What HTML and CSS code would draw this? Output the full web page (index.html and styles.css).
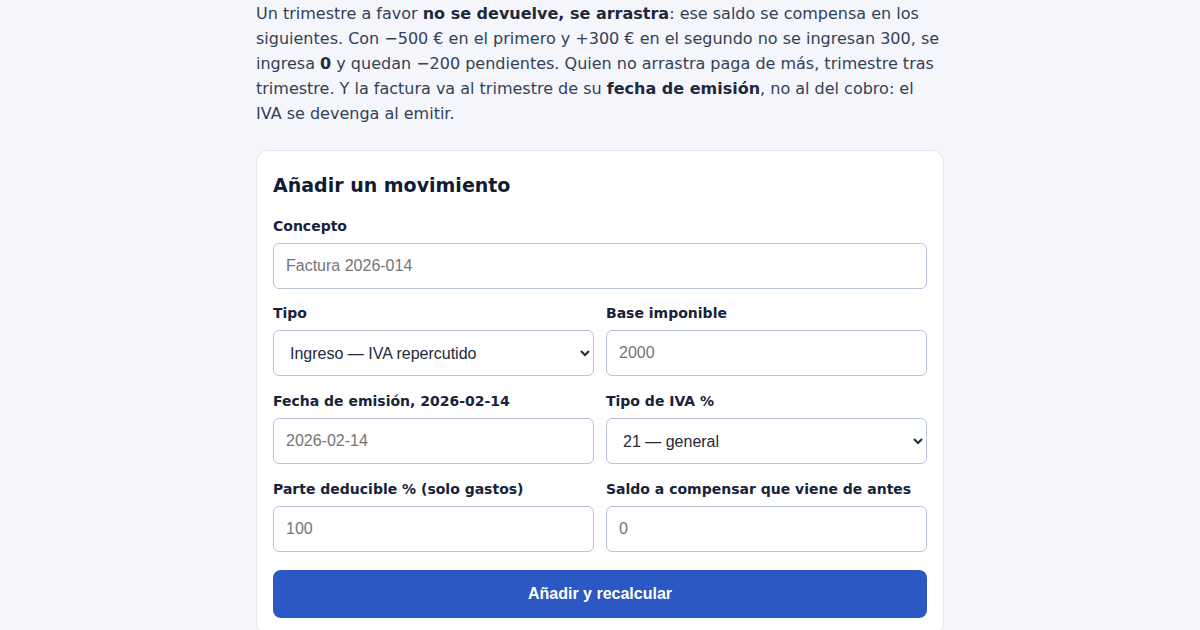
FILE: index.html
```html
<!DOCTYPE html>
<html lang="es">
<head>
  <meta charset="UTF-8" />
  <meta name="viewport" content="width=device-width, initial-scale=1.0"/>
  <title>IVA trimestral</title>
  <link rel="stylesheet" href="styles.css">
</head>
<body>
  <main class="page">
    <p class="intro">
      Un trimestre a favor <strong>no se devuelve, se arrastra</strong>: ese saldo se compensa en los
      siguientes. Con −500 € en el primero y +300 € en el segundo no se ingresan 300, se
      ingresa <strong>0</strong> y quedan −200 pendientes. Quien no arrastra paga de más, trimestre tras
      trimestre. Y la factura va al trimestre de su <strong>fecha de emisión</strong>, no al del cobro: el
      IVA se devenga al emitir.
    </p>

    <form class="card" onsubmit="return false;">
      <h2>Añadir un movimiento</h2>

      <div class="field field-wide">
        <label for="concepto">Concepto</label>
        <input id="concepto" type="text" placeholder="Factura 2026-014" />
      </div>

      <div class="grid">
        <div class="field">
          <label for="tipo">Tipo</label>
          <select id="tipo">
            <option>Ingreso — IVA repercutido</option>
            <option>Gasto — IVA soportado</option>
          </select>
        </div>
        <div class="field">
          <label for="base">Base imponible</label>
          <input id="base" type="number" placeholder="2000" />
        </div>
        <div class="field">
          <label for="fecha">Fecha de emisión, 2026-02-14</label>
          <input id="fecha" type="text" placeholder="2026-02-14" />
        </div>
        <div class="field">
          <label for="iva">Tipo de IVA %</label>
          <select id="iva">
            <option>21 — general</option>
            <option>10 — reducido</option>
            <option>4 — superreducido</option>
            <option>0 — exento</option>
          </select>
        </div>
        <div class="field">
          <label for="deducible">Parte deducible % (solo gastos)</label>
          <input id="deducible" type="number" placeholder="100" />
        </div>
        <div class="field">
          <label for="saldo">Saldo a compensar que viene de antes</label>
          <input id="saldo" type="number" placeholder="0" />
        </div>
      </div>

      <button class="btn" type="submit">Añadir y recalcular</button>
    </form>
  </main>
</body>
</html>
```

FILE: styles.css
```css
* { box-sizing: border-box; }
body {
  margin: 0;
  background: #f4f6fb;
  font-family: 'DejaVu Sans', sans-serif;
  color: #334155;
}
.page {
  width: 688px;
  margin: 0 auto;
  padding-top: 1px;
}
.intro {
  margin: 0 0 24px;
  font-size: 16px;
  line-height: 25px;
  color: #334155;
}
.intro strong { color: #1e293b; }
.card {
  background: #fff;
  border: 1px solid #e2e6ef;
  border-radius: 12px;
  padding: 20px 16px 16px;
}
h2 {
  margin: 0 0 17px;
  font-size: 19px;
  line-height: 28px;
  color: #0f1c33;
}
.field label {
  display: block;
  font-size: 14px;
  line-height: 21px;
  font-weight: bold;
  color: #17223b;
  margin-bottom: 6px;
}
.field-wide { margin-bottom: 14px; }
.grid {
  display: grid;
  grid-template-columns: 1fr 1fr;
  column-gap: 12px;
  row-gap: 15px;
}
input, select {
  display: block;
  width: 100%;
  height: 46px;
  padding: 0 12px;
  font-family: 'Liberation Sans', Arial, sans-serif;
  font-size: 16px;
  color: #1e293b;
  background: #fff;
  border: 1px solid #b9c3d8;
  border-radius: 6px;
}
input::placeholder { color: #757575; }
.btn {
  display: block;
  width: 100%;
  height: 48px;
  margin-top: 18px;
  font-family: 'Liberation Sans', Arial, sans-serif;
  font-size: 16px;
  font-weight: bold;
  background: #2b58c3;
  border: none;
  color: white;
  border-radius: 8px;
  cursor: pointer;
}
```
